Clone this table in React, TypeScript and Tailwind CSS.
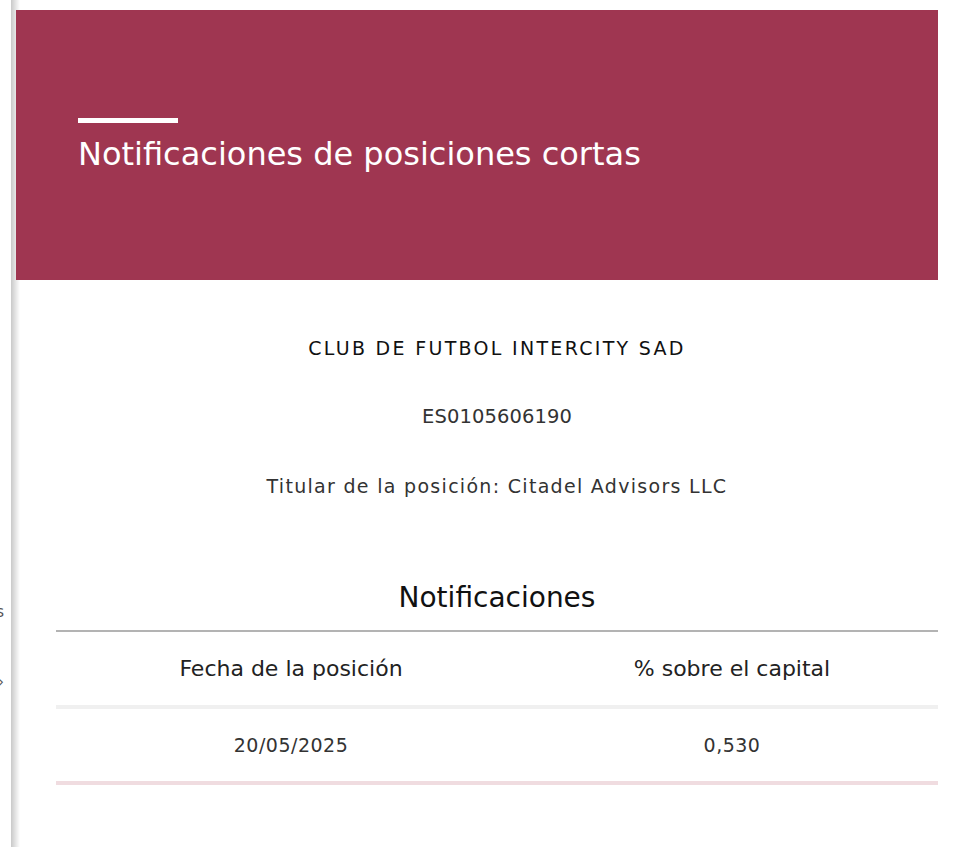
import { ReactNode } from "react";

const rows = [{ date: "20/05/2025", pct: "0,530" }];

const Cell = ({ children, head }: { children: ReactNode; head?: boolean }) => (
    <div
        className={`flex-1 flex items-center justify-center pl-[29px] ${
            head ? "text-[22px] font-medium text-[#222]" : "text-[19px] text-[#333] tracking-[0.5px]"
        }`}>
        {children}
    </div>
);

const App = () => {
    return (
        <div className="flex h-[847px] overflow-hidden font-['DejaVu_Sans',sans-serif] bg-[linear-gradient(to_right,#ffffff_11px,#c9c9c9_11px,#ffffff_20px)]">
            {/* sidebar, almost fully off-screen */}
            <aside className="w-[11px] shrink-0 overflow-hidden bg-white pt-[600px] text-[15px] text-[#555]">
                <div className="flex justify-end pr-[7px] leading-[24px] whitespace-nowrap">Avisos</div>
                <div className="flex justify-end pr-[7px] mt-[46px] leading-[24px]">›</div>
            </aside>

            <main className="flex-1 pl-[5px] pr-[36px] pt-[10px]">
                <header className="h-[270px] bg-[#9f3651] pl-[62px] pt-[108px]">
                    <div className="w-[100px] h-[5px] bg-white" />
                    <h1 className="mt-[13px] text-[32px] leading-[36px] text-white">
                        Notificaciones de posiciones cortas
                    </h1>
                </header>

                <div className="pl-[40px]">
                    <section className="flex flex-col items-center">
                        <h2 className="mt-[56px] text-[19px] leading-[24px] font-medium tracking-[2.3px] text-[#111]">
                            CLUB DE FUTBOL INTERCITY SAD
                        </h2>
                        <p className="mt-[45px] text-[19.5px] leading-[24px] tracking-[0.1px] text-[#333]">
                            ES0105606190
                        </p>
                        <p className="mt-[45px] text-[19px] leading-[24px] tracking-[1.3px] text-[#333]">
                            Titular de la posición: Citadel Advisors LLC
                        </p>
                        <h3 className="mt-[84px] text-[28px] leading-[32px] font-medium text-[#111]">
                            Notificaciones
                        </h3>
                    </section>

                    <div className="mt-[16px] border-t-2 border-[#b3b3b3]">
                        <div className="flex h-[77px] border-b-4 border-[#f0f0f0]">
                            <Cell head>Fecha de la posición</Cell>
                            <Cell head>% sobre el capital</Cell>
                        </div>
                        {rows.map(r => (
                            <div key={r.date} className="flex h-[76px] border-b-4 border-[#f0dce0]">
                                <Cell>{r.date}</Cell>
                                <Cell>{r.pct}</Cell>
                            </div>
                        ))}
                    </div>
                </div>
            </main>
        </div>
    );
};

export default App;
